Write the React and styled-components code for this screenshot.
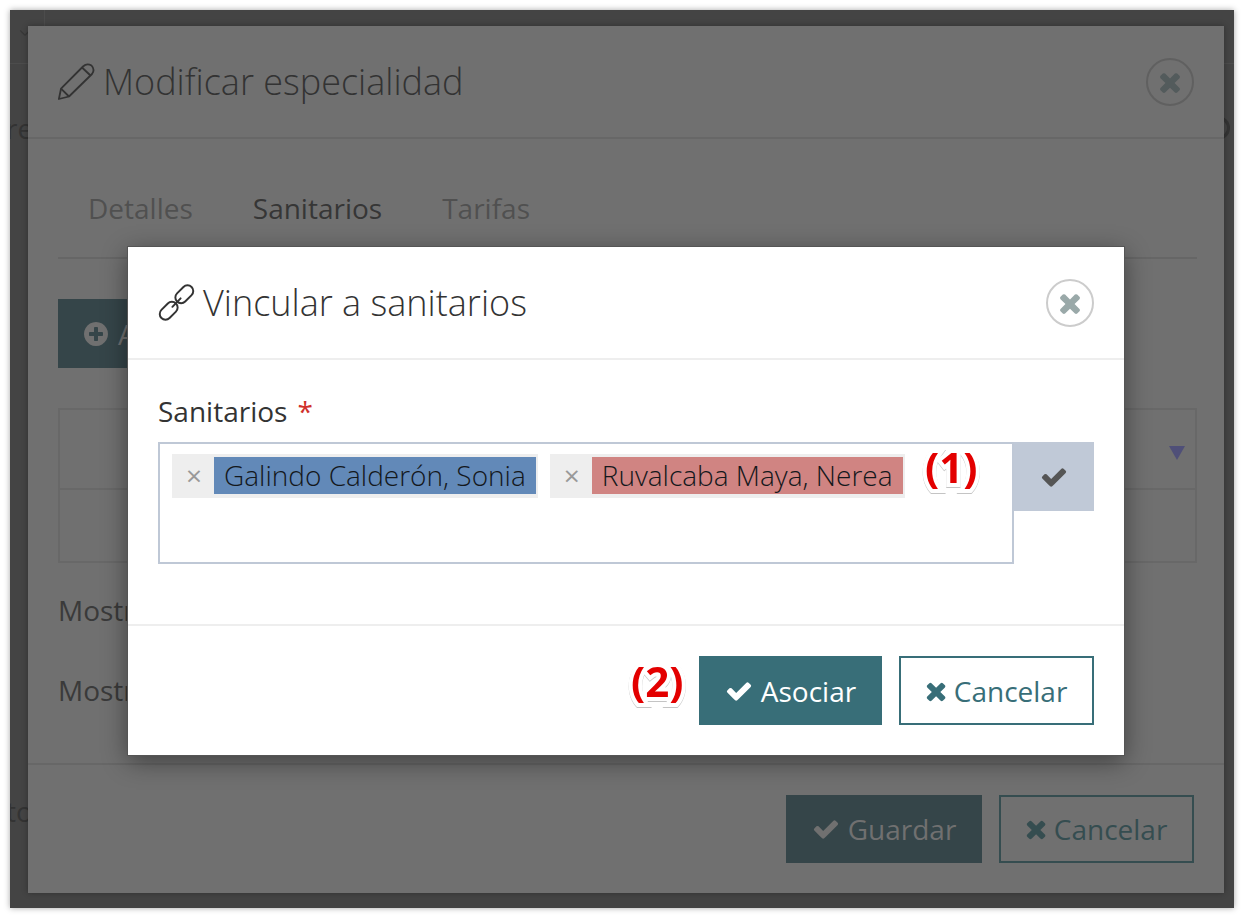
import React from 'react';
import styled, { createGlobalStyle } from 'styled-components';
import { ChevronDown } from 'lucide-react';

const GlobalStyle = createGlobalStyle`
  html, body {
    margin: 0;
    padding: 0;
    background: #fff;
    font-family: "Open Sans", "Liberation Sans", sans-serif;
  }
`;

const Frame = styled.div`
  position: relative;
  width: 1224px;
  height: 898px;
  margin: 10px;
  background: #444;
  overflow: hidden;
  box-shadow: 0 0 6px rgba(0, 0, 0, 0.35);
`;

const BackTop = styled.div`
  height: 53px;
  border-bottom: 1px solid #4c4c4c;
`;

const BackCell = styled.div`
  width: 35px;
  height: 100%;
  box-sizing: border-box;
  padding: 14px 0 0 6px;
  border-right: 1px solid #4c4c4c;
  color: #383838;
`;

const BackRow = styled.div`
  display: flex;
  justify-content: space-between;
  align-items: center;
  height: 40px;
  margin-top: ${(p) => p.$top}px;
  padding-right: 4px;
  font-size: 28px;
  color: #333;
`;

const BackText = styled.span`
  margin-left: -4px;
`;

const BackRing = styled.span`
  width: 18px;
  height: 18px;
  border: 3px solid #333;
  border-radius: 50%;
`;

const BackSpacer = styled.div`
  height: 603px;
`;

const Modal = styled.div`
  position: absolute;
  left: 18px;
  top: 16px;
  width: 1196px;
  height: 867px;
  background: #707070;
  display: flex;
  flex-direction: column;
  box-shadow: 0 0 6px rgba(0, 0, 0, 0.3);
`;

const Header = styled.div`
  height: 111px;
  flex: none;
  padding: 0 30px;
  display: flex;
  align-items: center;
  justify-content: space-between;
  border-bottom: 2px solid ${(p) => (p.$top ? '#676767' : '#eee')};
`;

const Title = styled.h2`
  margin: 0;
  display: flex;
  align-items: center;
  gap: 8px;
  font-weight: 300;
  font-size: 36px;
  color: #333;
`;

const CloseCircle = styled.div`
  width: 48px;
  height: 48px;
  box-sizing: border-box;
  border-radius: 50%;
  border: 2px solid ${(p) => (p.$top ? '#606060' : '#ccc')};
  color: ${(p) => (p.$top ? '#535b5c' : '#9aa9a9')};
  display: flex;
  align-items: center;
  justify-content: center;
`;

const Body = styled.div`
  padding: 0 27px 0 30px;
`;

const Tabs = styled.div`
  display: flex;
  padding: 49px 0 29px;
  border-bottom: 2px solid #666;
`;

const Tab = styled.div`
  padding: 0 30px;
  line-height: 40px;
  font-size: 28px;
  color: ${(p) => (p.$active ? '#363636' : '#505050')};
`;

const AddButton = styled.div`
  display: flex;
  align-items: center;
  gap: 8px;
  width: 240px;
  height: 69px;
  margin-top: 40px;
  padding-left: 24px;
  box-sizing: border-box;
  background: #354549;
  color: #707070;
  font-size: 28px;
`;

const Table = styled.div`
  margin: 40px 0 7px;
  border: 2px solid #686868;
`;

const TableHead = styled.div`
  height: 78px;
  border-bottom: 2px solid #686868;
  display: flex;
  align-items: center;
  justify-content: flex-end;
  padding-right: 10px;
`;

const SortArrow = styled.div`
  width: 0;
  height: 0;
  margin-top: 8px;
  border-left: 8px solid transparent;
  border-right: 8px solid transparent;
  border-top: 14px solid #4f4f78;
`;

const TableRow = styled.div`
  height: 71px;
`;

const Info = styled.div`
  height: 80px;
  display: flex;
  align-items: center;
  font-size: 28px;
  color: #3a3a3a;
`;

const Footer = styled.div`
  flex: 1;
  display: flex;
  justify-content: flex-end;
  gap: 17px;
  margin-top: ${(p) => (p.$top ? 33 : 0)}px;
  padding: 30px 30px 0;
  border-top: 2px solid ${(p) => (p.$top ? '#676767' : '#eee')};
`;

const Button = styled.div`
  height: ${(p) => (p.$top ? 68 : 69)}px;
  box-sizing: border-box;
  display: flex;
  align-items: center;
  justify-content: center;
  gap: 8px;
  width: ${(p) => p.$w}px;
  font-size: 28px;
  background: ${(p) => (p.$solid ? (p.$top ? '#354549' : '#386e78') : 'transparent')};
  color: ${(p) => (p.$solid ? (p.$top ? '#707070' : '#fff') : p.$top ? '#354d50' : '#386e78')};
  border: 2px solid ${(p) => (p.$solid ? 'transparent' : p.$top ? '#354d50' : '#386e78')};
`;

const Dialog = styled.div`
  position: absolute;
  left: 118px;
  top: 237px;
  width: 996px;
  height: 508px;
  background: #fff;
  display: flex;
  flex-direction: column;
  box-shadow: 0 0 0 1px #555, 0 6px 24px rgba(0, 0, 0, 0.45);
`;

const DialogBody = styled.div`
  flex: none;
  height: 264px;
  box-sizing: border-box;
  padding: 32px 30px 0;
`;

const Label = styled.div`
  display: flex;
  gap: 10px;
  line-height: 38px;
  font-size: 28px;
  color: #333;
`;

const Star = styled.span`
  color: #d0302b;
`;

const Field = styled.div`
  display: flex;
  align-items: flex-start;
  margin-top: 12px;
`;

const TagBox = styled.div`
  width: 856px;
  height: 122px;
  box-sizing: border-box;
  border: 2px solid #bfc8d6;
  padding: 10px 12px;
  display: flex;
  align-items: flex-start;
  gap: 12px;
`;

const Tag = styled.div`
  display: flex;
  height: 44px;
  box-sizing: border-box;
  padding: 3px 2px 4px 0;
  background: #eee;
`;

const TagRemove = styled.span`
  width: 42px;
  padding-left: 2px;
  box-sizing: border-box;
  text-align: center;
  line-height: 37px;
  font-size: 28px;
  color: #999;
`;

const TagText = styled.span`
  padding: 0 10px;
  line-height: 37px;
  font-size: 28px;
  font-weight: 300;
  color: #14181c;
  background: ${(p) => p.$color};
`;

const ConfirmButton = styled.div`
  width: 80px;
  height: 69px;
  background: #c0c9d7;
  color: #555;
  display: flex;
  align-items: center;
  justify-content: center;
`;

const Mark = styled.div`
  position: absolute;
  left: ${(p) => p.$x}px;
  top: ${(p) => p.$y}px;
  padding: 6px 8px;
  font-size: 42px;
  line-height: 44px;
  font-weight: 700;
  color: #e30000;
  -webkit-text-stroke: 8px #fff;
  paint-order: stroke fill;
  clip-path: inset(${(p) => p.$clip}px 0 0 0);
  filter: drop-shadow(0 1px 0 #c4c4c4);
`;

const times = 'M1490 1322q0 40-28 68l-136 136q-28 28-68 28t-68-28l-294-294-294 294q-28 28-68 28t-68-28l-136-136q-28-28-28-68t28-68l294-294-294-294q-28-28-28-68t28-68l136-136q28-28 68-28t68 28l294 294 294-294q28-28 68-28t68 28l136 136q28 28 28 68t-28 68l-294 294 294 294q28 28 28 68z';
const check = 'M1671 566q0 40-28 68l-724 724-136 136q-28 28-68 28t-68-28l-136-136-362-362q-28-28-28-68t28-68l136-136q28-28 68-28t68 28l294 295 656-657q28-28 68-28t68 28l136 136q28 28 28 68z';
const plusCircle = 'M1344 960v-128q0-26-19-45t-45-19h-256v-256q0-26-19-45t-45-19h-128q-26 0-45 19t-19 45v256h-256q-26 0-45 19t-19 45v128q0 26 19 45t45 19h256v256q0 26 19 45t45 19h128q26 0 45-19t19-45v-256h256q26 0 45-19t19-45zm320-64q0 209-103 385.5t-279.5 279.5-385.5 103-385.5-103-279.5-279.5-103-385.5 103-385.5 279.5-279.5 385.5-103 385.5 103 279.5 279.5 103 385.5z';

function Glyph({ d, size }) {
  return (
    <svg width={size} height={size} viewBox="0 0 1792 1792" fill="currentColor">
      <path d={d} />
    </svg>
  );
}

function TimesGlyph({ size }) {
  return (
    <svg width={size * 0.72} height={size} viewBox="252 0 1288 1792" fill="currentColor">
      <path d={times} />
    </svg>
  );
}

function PencilIcon() {
  return (
    <svg width="37" height="37" viewBox="0 0 37 37" fill="none" stroke="currentColor" strokeWidth="1.8" strokeLinejoin="round">
      <path d="M0.9 36 L3 25.7 L25 3.5 Q29 -0.3 33.5 2.5 Q37.3 6.5 34 11 L11 33.5 Z" />
      <path d="M3 25.7 L11 33.5 M24 4.5 L32.5 12.5" />
    </svg>
  );
}

function LinkIcon() {
  return (
    <svg width="37" height="37" viewBox="0 0 36 36" fill="none" stroke="currentColor" strokeWidth="1.9" strokeLinecap="round">
      <rect x="15.6" y="4.4" width="20" height="11.2" rx="5.6" transform="rotate(-45 25.6 10)" />
      <rect x="0.4" y="20.4" width="20" height="11.2" rx="5.6" transform="rotate(-45 10.4 26)" />
      <path d="M14 22.2 L22 14" />
    </svg>
  );
}

export default function App() {
  return (
    <>
      <GlobalStyle />
      <Frame>
        <BackTop>
          <BackCell>
            <ChevronDown size={18} strokeWidth={1.5} />
          </BackCell>
        </BackTop>
        <BackRow $top={44}>
          <BackText>re</BackText>
          <BackRing />
        </BackRow>
        <BackSpacer />
        <BackRow $top={40}>
          <BackText>to</BackText>
        </BackRow>

        <Modal>
          <Header $top>
            <Title>
              <PencilIcon />
              Modificar especialidad
            </Title>
            <CloseCircle $top>
              <Glyph d={times} size={30} />
            </CloseCircle>
          </Header>
          <Body>
            <Tabs>
              <Tab>Detalles</Tab>
              <Tab $active>Sanitarios</Tab>
              <Tab>Tarifas</Tab>
            </Tabs>
            <AddButton>
              <Glyph d={plusCircle} size={28} />
              Añadir
            </AddButton>
            <Table>
              <TableHead>
                <SortArrow />
              </TableHead>
              <TableRow />
            </Table>
            <Info>Mostrar</Info>
            <Info>Mostrar</Info>
          </Body>
          <Footer $top>
            <Button $top $solid $w={196}>
              <Glyph d={check} size={28} />
              Guardar
            </Button>
            <Button $top $w={195}>
              <TimesGlyph size={28} />
              Cancelar
            </Button>
          </Footer>
        </Modal>

        <Dialog>
          <Header>
            <Title>
              <LinkIcon />
              Vincular a sanitarios
            </Title>
            <CloseCircle>
              <Glyph d={times} size={30} />
            </CloseCircle>
          </Header>
          <DialogBody>
            <Label>
              Sanitarios <Star>*</Star>
            </Label>
            <Field>
              <TagBox>
                <Tag>
                  <TagRemove>×</TagRemove>
                  <TagText $color="#6289b8">Galindo Calderón, Sonia</TagText>
                </Tag>
                <Tag>
                  <TagRemove>×</TagRemove>
                  <TagText $color="#d08482">Ruvalcaba Maya, Nerea</TagText>
                </Tag>
              </TagBox>
              <ConfirmButton>
                <Glyph d={check} size={28} />
              </ConfirmButton>
            </Field>
          </DialogBody>
          <Footer>
            <Button $solid $w={183}>
              <Glyph d={check} size={28} />
              Asociar
            </Button>
            <Button $w={195}>
              <TimesGlyph size={28} />
              Cancelar
            </Button>
          </Footer>
          <Mark $x={789} $y={192} $clip={9}>(1)</Mark>
          <Mark $x={495} $y={406} $clip={12}>(2)</Mark>
        </Dialog>
      </Frame>
    </>
  );
}
